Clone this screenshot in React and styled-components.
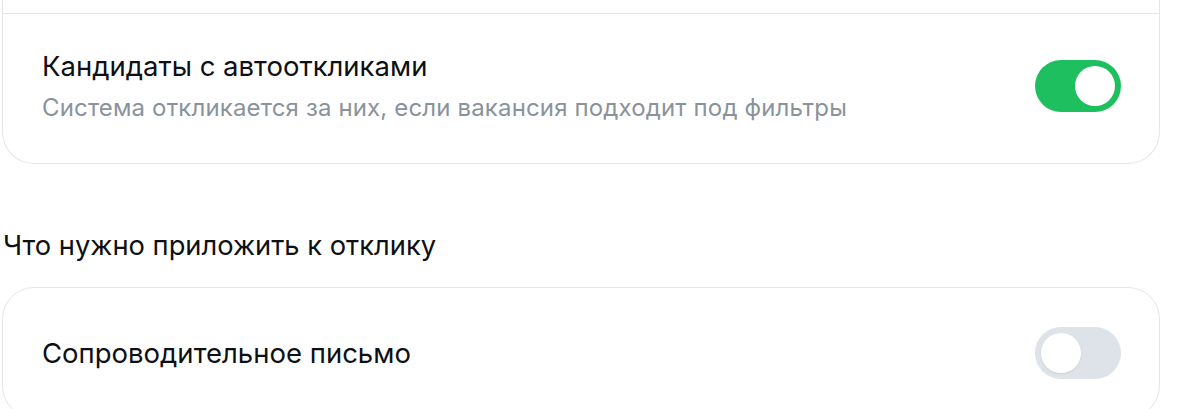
import React, { useState } from "react";
import styled, { createGlobalStyle } from "styled-components";

const Global = createGlobalStyle`
  html, body { margin: 0; padding: 0; background: #ffffff; }
  body { font-family: Inter, "Noto Sans", "Liberation Sans", sans-serif; color: #111418; -webkit-font-smoothing: antialiased; }
`;

const Page = styled.div`
  width: 1158px;
  padding-left: 2px;
  display: flex;
  flex-direction: column;
`;

const Card = styled.section`
  border: 1px solid #e4e6ea;
  border-radius: 32px;
  background: #fff;
  overflow: hidden;
  ${(p) => p.$continued && `
    border-top: none;
    border-top-left-radius: 0;
    border-top-right-radius: 0;
  `}
`;

const PrevTail = styled.div`
  height: 13px;
`;

const Row = styled.div`
  display: flex;
  align-items: center;
  justify-content: space-between;
  gap: 24px;
  min-height: ${(p) => p.$h}px;
  box-sizing: border-box;
  padding: 0 38px ${(p) => p.$pb || 0}px 39px;
  ${(p) => p.$divided && `border-top: 1px solid #e4e6ea;`}
`;

const TextBlock = styled.div`
  display: flex;
  flex-direction: column;
  gap: 10px;
`;

const Title = styled.div`
  font-size: 27.5px;
  line-height: 34px;
  font-weight: 400;
  color: #0e1013;
`;

const Sub = styled.div`
  font-size: 24px;
  line-height: 30px;
  color: #8a939c;
  letter-spacing: 0.15px;
`;

const SectionHeading = styled.h2`
  margin: 65px 0 24px 1px;
  font-size: 27.3px;
  line-height: 34px;
  font-weight: 400;
  color: #0e1013;
`;

const Track = styled.button`
  flex: none;
  width: 86px;
  height: 52px;
  border-radius: 26px;
  border: none;
  padding: 6px;
  display: flex;
  justify-content: ${(p) => (p.$on ? "flex-end" : "flex-start")};
  background: ${(p) => (p.$on ? "#1ebf5f" : "#dee2e9")};
  cursor: pointer;
  box-sizing: border-box;
`;

const Knob = styled.span`
  width: 40px;
  height: 40px;
  border-radius: 50%;
  background: #fff;
  box-shadow: ${(p) => (p.$on ? "none" : "0 1px 2px rgba(0,0,0,0.08)")};
`;

function Toggle({ initial }) {
  const [on, setOn] = useState(initial);
  return (
    <Track $on={on} onClick={() => setOn(!on)} aria-pressed={on}>
      <Knob $on={on} />
    </Track>
  );
}

export default function App() {
  return (
    <>
      <Global />
      <Page>
        <Card $continued>
          <PrevTail />
          <Row $h={150} $pb={5} $divided>
            <TextBlock>
              <Title>Кандидаты с автооткликами</Title>
              <Sub>Система откликается за них, если вакансия подходит под фильтры</Sub>
            </TextBlock>
            <Toggle initial={true} />
          </Row>
        </Card>
        <SectionHeading>Что нужно приложить к отклику</SectionHeading>
        <Card>
          <Row $h={129}>
            <Title>Сопроводительное письмо</Title>
            <Toggle initial={false} />
          </Row>
        </Card>
      </Page>
    </>
  );
}
